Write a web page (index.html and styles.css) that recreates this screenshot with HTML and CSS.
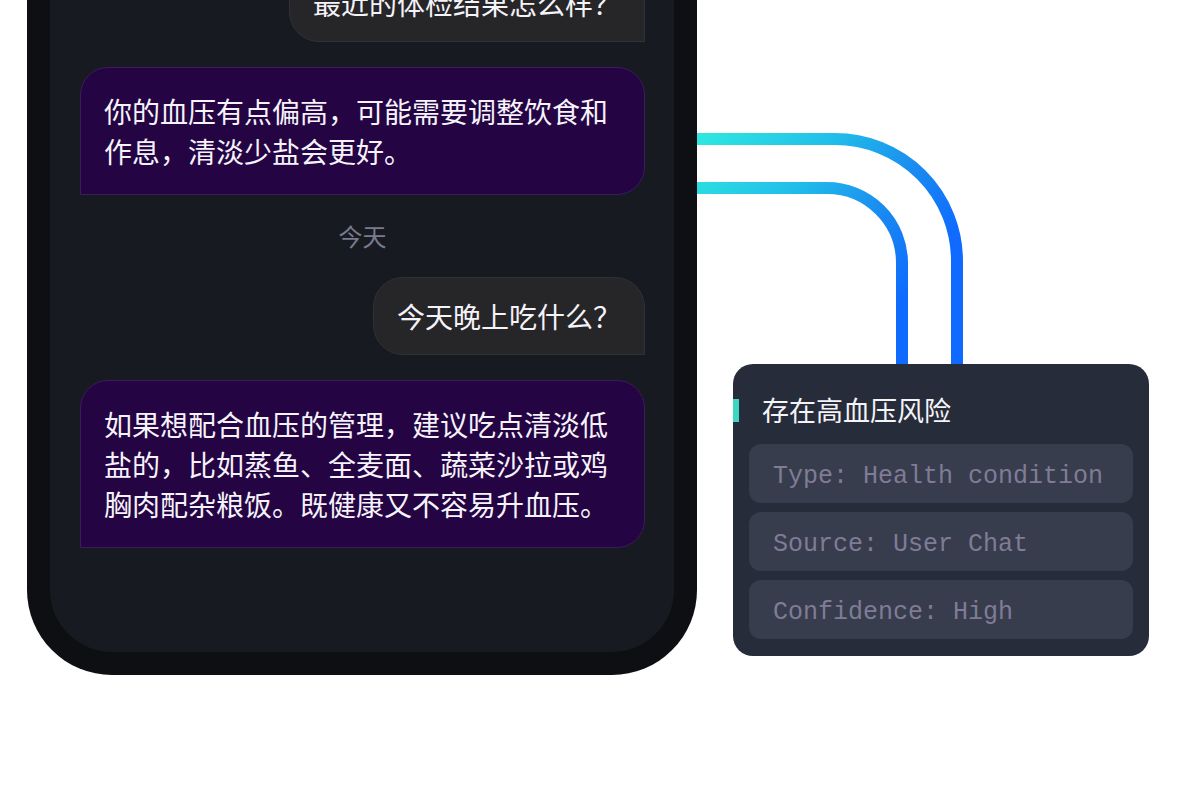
FILE: index.html
```html
<!DOCTYPE html>
<html lang="zh-CN">
<head>
    <meta charset="UTF-8">
    <meta name="viewport" content="width=device-width, initial-scale=1.0">
    <title>健康记忆</title>
    <link rel="stylesheet" href="styles.css">
</head>
<body>
    <div class="stage">
        <svg class="links" width="1200" height="800" viewBox="0 0 1200 800">
            <defs>
                <linearGradient id="linkGrad" gradientUnits="userSpaceOnUse" x1="697" y1="139" x2="900" y2="300">
                    <stop offset="0" stop-color="#2ee8df"/>
                    <stop offset="0.4" stop-color="#22bfe9"/>
                    <stop offset="0.75" stop-color="#1988f1"/>
                    <stop offset="1" stop-color="#0f6bff"/>
                </linearGradient>
            </defs>
            <path d="M690 139 H835 A122 122 0 0 1 957 261 V372" fill="none" stroke="url(#linkGrad)" stroke-width="12"/>
            <path d="M690 188 H827 A75 75 0 0 1 902 263 V372" fill="none" stroke="url(#linkGrad)" stroke-width="12"/>
        </svg>

        <div class="phone">
            <div class="screen">
                <div class="bubble user">最近的体检结果怎么样？</div>
                <div class="bubble bot">你的血压有点偏高，可能需要调整饮食和作息，清淡少盐会更好。</div>
                <div class="day">今天</div>
                <div class="bubble user">今天晚上吃什么？</div>
                <div class="bubble bot">如果想配合血压的管理，建议吃点清淡低盐的，比如蒸鱼、全麦面、蔬菜沙拉或鸡胸肉配杂粮饭。既健康又不容易升血压。</div>
            </div>
        </div>

        <div class="memory">
            <div class="memory-title">
                <span class="accent"></span>
                <span>存在高血压风险</span>
            </div>
            <div class="memory-rows">
                <div class="memory-row">Type: Health condition</div>
                <div class="memory-row">Source: User Chat</div>
                <div class="memory-row">Confidence: High</div>
            </div>
        </div>
    </div>
</body>
</html>
```

FILE: styles.css
```css
body {
    margin: 0;
    background-color: #ffffff;
    font-family: "Noto Sans CJK SC", "Noto Sans", sans-serif;
}
.stage {
    position: relative;
    display: flex;
    align-items: flex-start;
    width: 1200px;
    height: 800px;
    padding-left: 27px;
    box-sizing: border-box;
    overflow: hidden;
}
.links {
    position: absolute;
    top: 0;
    left: 0;
}
.phone {
    position: relative;
    z-index: 1;
    flex: none;
    width: 670px;
    height: 875px;
    margin-top: -200px;
    padding: 23px;
    box-sizing: border-box;
    background-color: #0e0f12;
    border-radius: 85px;
}
.screen {
    display: flex;
    flex-direction: column;
    justify-content: flex-end;
    gap: 25px;
    height: 100%;
    padding: 0 29px 104px 30px;
    box-sizing: border-box;
    background-color: #181a21;
    border-radius: 62px;
    overflow: hidden;
}
.bubble {
    flex: none;
    font-size: 28px;
    line-height: 40px;
    color: #f5f3fa;
}
.user {
    align-self: flex-end;
    padding: 18px 23px;
    background-color: #262628;
    border: 1px solid #2f3138;
    border-radius: 30px 30px 0 30px;
}
.bot {
    align-self: stretch;
    padding: 23px;
    background-color: #240443;
    border: 1px solid #3a1d5c;
    border-radius: 28px 28px 28px 0;
}
.day {
    flex: none;
    text-align: center;
    font-size: 24px;
    line-height: 32px;
    color: #7b7a8e;
}
.memory {
    position: relative;
    z-index: 1;
    flex: none;
    width: 416px;
    margin-top: 364px;
    margin-left: 36px;
    padding: 26px 16px 17px 0;
    box-sizing: border-box;
    background-color: #262c3a;
    border-radius: 20px;
}
.memory-title {
    display: flex;
    align-items: center;
    gap: 23px;
    font-size: 27px;
    line-height: 40px;
    color: #f4f4f8;
}
.accent {
    width: 6px;
    height: 23px;
    background-color: #3dd6c0;
}
.memory-rows {
    display: flex;
    flex-direction: column;
    gap: 9px;
    margin: 14px 0 0 16px;
}
.memory-row {
    display: flex;
    align-items: center;
    height: 59px;
    padding: 5px 24px 0;
    box-sizing: border-box;
    background-color: #373d4c;
    border-radius: 12px;
    font-family: "Liberation Mono", "DejaVu Sans Mono", monospace;
    font-size: 25px;
    color: #807b97;
}
```
